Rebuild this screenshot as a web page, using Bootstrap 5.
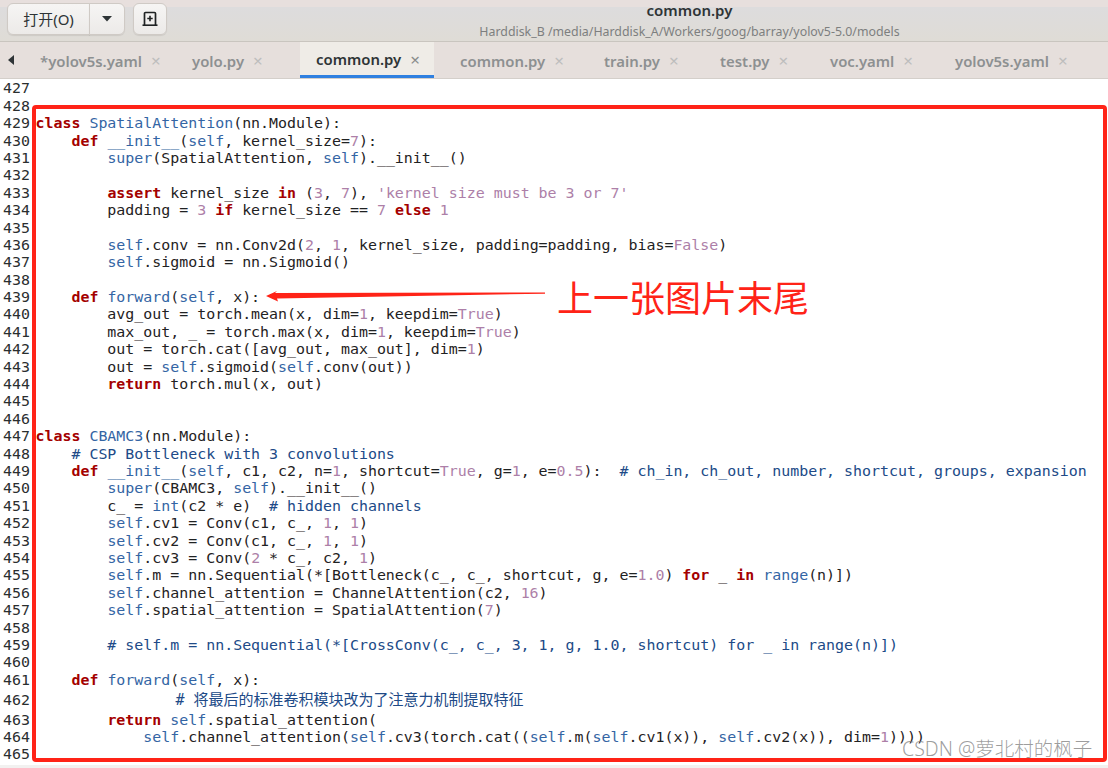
<!DOCTYPE html>
<html lang="zh">
<head>
<meta charset="utf-8">
<title>common.py</title>
<link href="https://cdn.jsdelivr.net/npm/bootstrap@5.3.0/dist/css/bootstrap.min.css" rel="stylesheet">
<style>
html,body{margin:0;height:768px;overflow:hidden;background:#f2f1f0}
.stage{position:relative;width:1108px;height:768px;overflow:hidden}
.topbar{height:42px;background:linear-gradient(#dddcdd,#dfdcd6);border-top:7px solid #e7dfdd;border-bottom:1px solid #c9c5bf;padding-left:7px;font-family:"Noto Sans","Noto Sans CJK SC",sans-serif}
.tool-row{margin-top:-4px}
.tb-btn{height:32px;background:linear-gradient(#f6f5f4,#eceae8);border:1px solid #cfcac5;color:#2e3436;font-size:15px;padding:0;border-radius:6px;box-shadow:0 1px 1px rgba(0,0,0,.08)}
.tb-open{width:83px}
.tb-drop{width:36px}
.tb-new{width:34px;margin-left:8px}
.title-box{width:421px;margin-left:312px;margin-top:-7px;text-align:center;line-height:1}
.title-main{font-size:15px;font-weight:600;color:#2e3436;line-height:20px;height:21px}
.title-sub{font-size:12.37px;color:#7d7f7f;line-height:22px;white-space:nowrap}
.tabbar{height:37px;background:#e6dfdc;border-bottom:1px solid #d4cfca;font-family:"Noto Sans",sans-serif;font-size:14.9px;font-weight:600;color:#8d9091}
.tab-back{width:24px}
.doc-tab{height:36px;padding-left:16px;padding-top:2px;white-space:nowrap}
.doc-tab i{font-style:normal;font-weight:400;font-size:17px;color:#bdbdbd;margin-left:9px}
.w-a{width:152px}.w-b{width:124px}.w-c{width:144px}.w-e{width:116px}.w-f{width:110px}.w-g{width:125px}.w-h{width:140px}
.doc-on{width:134px;margin-right:10px;background:#efece7;color:#2e3436;border-bottom:3px solid #2f80e0}
.doc-on i{color:#8a8c8c}
.editor{height:686px;background:#fff;font-family:"DejaVu Sans Mono","Noto Sans CJK SC",monospace;font-size:14.93px;line-height:17.4px;color:#1f2223;padding-top:1.4px}
.src{display:flex;height:17.4px;white-space:pre}
.src b{font-weight:700;color:#a40000}
.src-tall{height:22.6px;line-height:22.6px}
.gut{width:35.5px;padding-left:3px;flex:none;color:#2a2e2f}
.fn{color:#3465a4}
.num{color:#ad7fa8}
.cmt{color:#204a87}
.cjk-ind{padding-left:140px;font-size:15px}
.red-frame{position:absolute;left:32px;top:105px;width:1075px;height:657px;border:4px solid #ff2317;border-radius:4px;pointer-events:none}
.red-arrow{position:absolute;left:260px;top:285px;width:290px;height:22px}
.red-note{position:absolute;left:557px;top:271px;font-family:"Noto Sans CJK SC",sans-serif;font-weight:400;font-size:36px;line-height:50px;color:#ff2317;white-space:nowrap}
.mark-wm{position:absolute;left:902px;top:735px;font-family:"Noto Sans","Noto Sans CJK SC",sans-serif;font-weight:300;font-size:19.5px;line-height:28px;color:rgba(120,120,120,.72);white-space:nowrap}
</style>
</head>
<body>
<div class="stage">
  <div class="topbar d-flex align-items-start">
    <div class="d-flex tool-row">
      <div class="btn-group">
        <button class="btn tb-btn tb-open">打开(O)</button>
        <button class="btn tb-btn tb-drop d-flex align-items-center justify-content-center" aria-label="menu"><svg width="10" height="6" viewBox="0 0 10 6"><path d="M0 0h10L5 5.500z" fill="#2e3436"/></svg></button>
      </div>
      <button class="btn tb-btn tb-new d-flex align-items-center justify-content-center" aria-label="new tab"><svg width="16" height="16" viewBox="0 0 16 16"><path d="M2.500 14V2.500A1 1 0 0 1 3.500 1.500h9a1 1 0 0 1 1 1V14" fill="none" stroke="#1f2223" stroke-width="1.700"/><path d="M0.500 14.200h15" stroke="#1f2223" stroke-width="1.600"/><path d="M8 4.800v5.400M5.300 7.500h5.400" stroke="#1f2223" stroke-width="1.600"/></svg></button>
    </div>
    <div class="title-box">
      <div class="title-main">common.py</div>
      <div class="title-sub">Harddisk_B /media/Harddisk_A/Workers/goog/barray/yolov5-5.0/models</div>
    </div>
  </div>
  <div class="tabbar d-flex">
    <div class="tab-back d-flex align-items-center ps-2"><svg width="6" height="10" viewBox="0 0 6 10"><path d="M6 0v10L0 5z" fill="#2e3436"/></svg></div>
    <div class="doc-tab d-flex align-items-center w-a">*yolov5s.yaml<i>×</i></div>
    <div class="doc-tab d-flex align-items-center w-b">yolo.py<i>×</i></div>
    <div class="doc-tab d-flex align-items-center doc-on">common.py<i>×</i></div>
    <div class="doc-tab d-flex align-items-center w-c">common.py<i>×</i></div>
    <div class="doc-tab d-flex align-items-center w-e">train.py<i>×</i></div>
    <div class="doc-tab d-flex align-items-center w-f">test.py<i>×</i></div>
    <div class="doc-tab d-flex align-items-center w-g">voc.yaml<i>×</i></div>
    <div class="doc-tab d-flex align-items-center w-h">yolov5s.yaml<i>×</i></div>
  </div>
  <div class="editor">
<div class="src"><span class="gut">427</span></div>
<div class="src"><span class="gut">428</span></div>
<div class="src"><span class="gut">429</span><span><b>class</b> <span class="fn">SpatialAttention</span>(nn.Module):</span></div>
<div class="src"><span class="gut">430</span><span>    <b>def</b> <span class="fn">__init__</span>(<span class="fn">self</span>, kernel_size=<span class="num">7</span>):</span></div>
<div class="src"><span class="gut">431</span><span>        <span class="fn">super</span>(SpatialAttention, <span class="fn">self</span>).__init__()</span></div>
<div class="src"><span class="gut">432</span></div>
<div class="src"><span class="gut">433</span><span>        <b>assert</b> kernel_size <b>in</b> (<span class="num">3</span>, <span class="num">7</span>), <span class="num">'kernel size must be 3 or 7'</span></span></div>
<div class="src"><span class="gut">434</span><span>        padding = <span class="num">3</span> <b>if</b> kernel_size == <span class="num">7</span> <b>else</b> <span class="num">1</span></span></div>
<div class="src"><span class="gut">435</span></div>
<div class="src"><span class="gut">436</span><span>        <span class="fn">self</span>.conv = nn.Conv2d(<span class="num">2</span>, <span class="num">1</span>, kernel_size, padding=padding, bias=<span class="num">False</span>)</span></div>
<div class="src"><span class="gut">437</span><span>        <span class="fn">self</span>.sigmoid = nn.Sigmoid()</span></div>
<div class="src"><span class="gut">438</span></div>
<div class="src"><span class="gut">439</span><span>    <b>def</b> <span class="fn">forward</span>(<span class="fn">self</span>, x):</span></div>
<div class="src"><span class="gut">440</span><span>        avg_out = torch.mean(x, dim=<span class="num">1</span>, keepdim=<span class="num">True</span>)</span></div>
<div class="src"><span class="gut">441</span><span>        max_out, _ = torch.max(x, dim=<span class="num">1</span>, keepdim=<span class="num">True</span>)</span></div>
<div class="src"><span class="gut">442</span><span>        out = torch.cat([avg_out, max_out], dim=<span class="num">1</span>)</span></div>
<div class="src"><span class="gut">443</span><span>        out = <span class="fn">self</span>.sigmoid(<span class="fn">self</span>.conv(out))</span></div>
<div class="src"><span class="gut">444</span><span>        <b>return</b> torch.mul(x, out)</span></div>
<div class="src"><span class="gut">445</span></div>
<div class="src"><span class="gut">446</span></div>
<div class="src"><span class="gut">447</span><span><b>class</b> <span class="fn">CBAMC3</span>(nn.Module):</span></div>
<div class="src"><span class="gut">448</span><span class="cmt">    # CSP Bottleneck with 3 convolutions</span></div>
<div class="src"><span class="gut">449</span><span>    <b>def</b> <span class="fn">__init__</span>(<span class="fn">self</span>, c1, c2, n=<span class="num">1</span>, shortcut=<span class="num">True</span>, g=<span class="num">1</span>, e=<span class="num">0.5</span>):  <span class="cmt"># ch_in, ch_out, number, shortcut, groups, expansion</span></span></div>
<div class="src"><span class="gut">450</span><span>        <span class="fn">super</span>(CBAMC3, <span class="fn">self</span>).__init__()</span></div>
<div class="src"><span class="gut">451</span><span>        c_ = <span class="fn">int</span>(c2 * e)  <span class="cmt"># hidden channels</span></span></div>
<div class="src"><span class="gut">452</span><span>        <span class="fn">self</span>.cv1 = Conv(c1, c_, <span class="num">1</span>, <span class="num">1</span>)</span></div>
<div class="src"><span class="gut">453</span><span>        <span class="fn">self</span>.cv2 = Conv(c1, c_, <span class="num">1</span>, <span class="num">1</span>)</span></div>
<div class="src"><span class="gut">454</span><span>        <span class="fn">self</span>.cv3 = Conv(<span class="num">2</span> * c_, c2, <span class="num">1</span>)</span></div>
<div class="src"><span class="gut">455</span><span>        <span class="fn">self</span>.m = nn.Sequential(*[Bottleneck(c_, c_, shortcut, g, e=<span class="num">1.0</span>) <b>for</b> _ <b>in</b> <span class="fn">range</span>(n)])</span></div>
<div class="src"><span class="gut">456</span><span>        <span class="fn">self</span>.channel_attention = ChannelAttention(c2, <span class="num">16</span>)</span></div>
<div class="src"><span class="gut">457</span><span>        <span class="fn">self</span>.spatial_attention = SpatialAttention(<span class="num">7</span>)</span></div>
<div class="src"><span class="gut">458</span></div>
<div class="src"><span class="gut">459</span><span class="cmt">        # self.m = nn.Sequential(*[CrossConv(c_, c_, 3, 1, g, 1.0, shortcut) for _ in range(n)])</span></div>
<div class="src"><span class="gut">460</span></div>
<div class="src"><span class="gut">461</span><span>    <b>def</b> <span class="fn">forward</span>(<span class="fn">self</span>, x):</span></div>
<div class="src src-tall"><span class="gut">462</span><span class="cmt cjk-ind"># 将最后的标准卷积模块改为了注意力机制提取特征</span></div>
<div class="src"><span class="gut">463</span><span>        <b>return</b> <span class="fn">self</span>.spatial_attention(</span></div>
<div class="src"><span class="gut">464</span><span>            <span class="fn">self</span>.channel_attention(<span class="fn">self</span>.cv3(torch.cat((<span class="fn">self</span>.m(<span class="fn">self</span>.cv1(x)), <span class="fn">self</span>.cv2(x)), dim=<span class="num">1</span>))))</span></div>
<div class="src"><span class="gut">465</span></div>
  </div>
  <div class="red-frame"></div>
  <svg class="red-arrow" viewBox="0 0 290 22"><path d="M6 11L17 6 15 8 285 7.500V8.700L17 13.500 18 16.500z" fill="#ff2317"/></svg>
  <div class="red-note">上一张图片末尾</div>
  <div class="mark-wm">CSDN @萝北村的枫子</div>
</div>
<script src="https://cdn.jsdelivr.net/npm/bootstrap@5.3.0/dist/js/bootstrap.bundle.min.js"></script>
</body>
</html>
